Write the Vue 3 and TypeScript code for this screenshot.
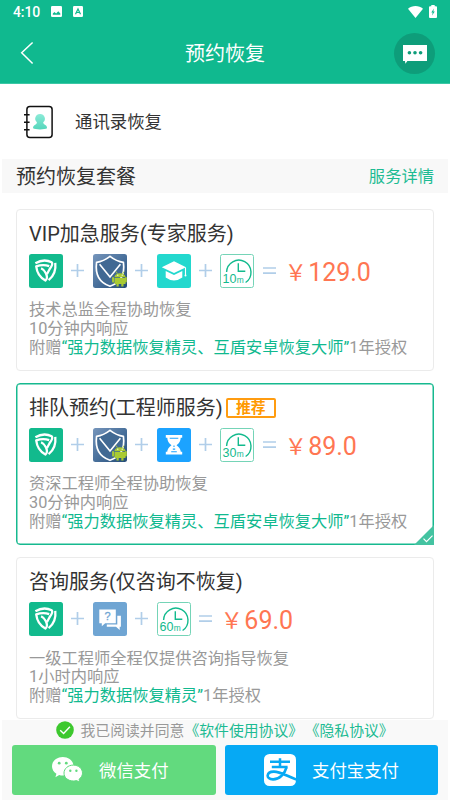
<script setup lang="ts">
import { ref } from 'vue'

type IconKind = 'shield' | 'android' | 'expert' | 'hourglass' | 'consult' | 'clock'

interface Plan {
  title: string
  recommended?: boolean
  icons: IconKind[]
  minutes: number
  price: string
  lines: string[]
  gift: string
}

const plans: Plan[] = [
  {
    title: 'VIP加急服务(专家服务)',
    icons: ['shield', 'android', 'expert', 'clock'],
    minutes: 10,
    price: '129.0',
    lines: ['技术总监全程协助恢复', '10分钟内响应'],
    gift: '“强力数据恢复精灵、互盾安卓恢复大师”',
  },
  {
    title: '排队预约(工程师服务)',
    recommended: true,
    icons: ['shield', 'android', 'hourglass', 'clock'],
    minutes: 30,
    price: '89.0',
    lines: ['资深工程师全程协助恢复', '30分钟内响应'],
    gift: '“强力数据恢复精灵、互盾安卓恢复大师”',
  },
  {
    title: '咨询服务(仅咨询不恢复)',
    icons: ['shield', 'consult', 'clock'],
    minutes: 60,
    price: '69.0',
    lines: ['一级工程师全程仅提供咨询指导恢复', '1小时内响应'],
    gift: '“强力数据恢复精灵”',
  },
]

const selected = ref(1)
</script>

<template>
  <div class="screen">
    <header class="header">
      <div class="status">
        <span class="time">4:10</span>
        <svg class="st-img" width="11" height="11" viewBox="0 0 11 11">
          <rect width="11" height="11" rx="1.2" fill="#fff" />
          <path d="M1.8 8.8V7.4L3.5 6l1.6 1.4L7.3 5.2l2 2.2v1.4z" fill="#10b98f" />
        </svg>
        <svg class="st-a" width="10" height="11" viewBox="0 0 10 11">
          <rect width="10" height="11" rx="1.2" fill="#fff" />
          <path d="M2.5 8.2 5 2.9l2.5 5.3M3.4 6.5h3.2" fill="none" stroke="#10b98f" stroke-width="1.2" />
        </svg>
        <span class="grow"></span>
        <svg class="wifi" width="15" height="12" viewBox="0 0 15 12">
          <path d="M0 2.8C4-.8 11-.8 15 2.8L7.5 12z" fill="#fff" />
        </svg>
        <svg width="8" height="13" viewBox="0 0 8 13">
          <path d="M2.3 1.2V0h3.4v1.2H7q1 0 1 1V12q0 1-1 1H1q-1 0-1-1V2.2q0-1 1-1z" fill="#fff" />
          <path d="M4.9 3.5 2.3 7.6h1.4l-.7 3L5.8 6.4H4.3z" fill="#10b98f" />
        </svg>
      </div>
      <div class="nav">
        <svg class="back" width="14" height="24" viewBox="0 0 14 24">
          <path d="M12.6 1.5 1.7 11.8l10.9 10.7" fill="none" stroke="#fff" stroke-width="1.5" />
        </svg>
        <h1>预约恢复</h1>
        <div class="chat">
          <svg width="24" height="19" viewBox="0 0 24 19">
            <path d="M0 0h24v16H4.4L2.4 18.8 2 16H0z" fill="#fff" />
            <g fill="#0e9d7a"><circle cx="6.4" cy="7.8" r="1.8" /><circle cx="12" cy="7.8" r="1.8" /><circle cx="17.6" cy="7.8" r="1.8" /></g>
          </svg>
        </div>
      </div>
    </header>

    <div class="kind">
      <svg width="30" height="34" viewBox="0 0 30 34">
        <defs>
          <linearGradient id="person" x2="0" y2="1"><stop stop-color="#8cebd8" /><stop offset="1" stop-color="#55d6bb" /></linearGradient>
        </defs>
        <rect x="2.9" y="1.6" width="25.2" height="31" rx="3" fill="none" stroke="#111" stroke-width="1.5" />
        <path d="M0 9.8h5.6M0 17.3h5.6M0 24.8h5.6" stroke="#111" stroke-width="1.4" />
        <path d="M16 9a4.7 4.7 0 0 1 3.2 8.3c.1 2.8 4.3 2.6 3.8 6-2 1.5-12 1.5-13.9 0-.4-3.4 3.8-3.2 3.8-6A4.7 4.7 0 0 1 16 9z" fill="url(#person)" />
      </svg>
      <span>通讯录恢复</span>
    </div>

    <div class="section">
      <h2>预约恢复套餐</h2>
      <a>服务详情</a>
    </div>

    <main class="plans">
      <article v-for="(plan, i) in plans" :key="plan.title" class="plan" :class="{ active: selected === i }" @click="selected = i">
        <div class="title"><h3>{{ plan.title }}</h3><em v-if="plan.recommended">推荐</em></div>
        <div class="bundle">
          <template v-for="(icon, n) in plan.icons" :key="icon">
            <svg v-if="n" class="op" width="13" height="13" viewBox="0 0 13 13"><path d="M0 6.5h13M6.5 0v13" stroke="#b1cee9" stroke-width="1.7" /></svg>

            <svg v-if="icon === 'shield'" class="icon" viewBox="0 0 34 34">
              <rect width="34" height="34" rx="2.5" fill="#12ba8d" />
              <g fill="none" stroke="#fff" stroke-width="2.3" stroke-linejoin="round">
                <path d="M6.4 9.3C11.5 6.2 18 5.9 22.7 8.3c1.4 1.3-.2 4.2-2 6.7l-2.8 5.2" />
                <path d="M19.6 26.2C24.9 22 27.1 16 26.3 8.9" />
                <path d="M20.2 12.2C16.4 10.8 11.2 11 7.2 12.4 7.9 18.6 11.3 23.8 16.4 26.5c1.7-1.2 1.8-4.2.5-7.2-1.1-2.5-2.6-4-4.8-5" />
              </g>
            </svg>

            <svg v-else-if="icon === 'android'" class="icon" viewBox="0 0 34 34">
              <defs><linearGradient id="blue" x2="1" y2="1"><stop stop-color="#7695bb" /><stop offset=".5" stop-color="#4a719c" /><stop offset="1" stop-color="#234c77" /></linearGradient></defs>
              <rect width="34" height="34" rx="2.5" fill="url(#blue)" />
              <path d="M17 2.4Q10.5 7.4 3.6 8.4C2 20.5 6.5 28.8 17 32.3 27.5 28.8 32 20.5 30.4 8.4Q23.5 7.4 17 2.4z" fill="#416993" stroke="#fff" stroke-width="1.7" />
              <path d="M6.6 10.2 17 23l10.4-12.8" fill="none" stroke="#fff" stroke-width="1.6" />
              <g fill="#a9cb32">
                <path d="M21.4 23a5.8 5 0 0 1 11.2 0z" />
                <path d="M21.5 23.7h11v6.3h-2v2.4h-2.2V30h-2.6v2.4h-2.2V30h-2z" />
                <rect x="19.1" y="23" width="1.9" height="5.6" rx=".9" /><rect x="32" y="23" width="1.8" height="5.6" rx=".8" />
              </g>
              <path d="m23 17.5 1.4 2.2m6.6-2.2-1.4 2.2" stroke="#a9cb32" stroke-width=".9" />
              <circle cx="24.8" cy="21.2" r=".6" fill="#fff" /><circle cx="29.2" cy="21.2" r=".6" fill="#fff" />
            </svg>

            <svg v-else-if="icon === 'expert'" class="icon" viewBox="0 0 34 34">
              <rect width="34" height="34" rx="2.5" fill="#23d8ce" />
              <path d="M17 7.3 29 13.2 17 19.1 4.8 13.2z" fill="#fff" />
              <path d="M8.7 17 17 21.1l8.3-4.1v6.5Q17 29.5 8.7 23.5z" fill="#fff" />
              <path d="M28.5 13.4v8.1" stroke="#fff" stroke-width="1.1" /><circle cx="28.5" cy="21.4" r="1" fill="#fff" />
            </svg>

            <svg v-else-if="icon === 'hourglass'" class="icon" viewBox="0 0 34 34">
              <rect width="34" height="34" rx="2.5" fill="#1ca3ff" />
              <path d="M8.8 7h16.4v2.7h-1.5q-.2 5-4.2 7.5 4 2.6 4.3 6.5h1.4v2.8H8.8v-2.8h1.4q.3-3.9 4.3-6.5-4-2.5-4.2-7.5H8.8z" fill="#fff" />
              <path d="M12.7 10.2h8.6M17 17.5v1.6m-1.2 2h2.4m-4 2.7h5.6" stroke="#1ca3ff" stroke-width="1.1" />
            </svg>

            <svg v-else-if="icon === 'consult'" class="icon" viewBox="0 0 34 34">
              <rect width="34" height="34" rx="2.5" fill="#6fa5d3" />
              <path d="M6.3 7.5h16.5v13.7H12.2l-3.4 3v-3H6.3z" fill="#fff" />
              <path d="M24.3 13.7h3.6v11.1h-1.2v3.1l-3.7-3.1h-9.2v-2.3h10.5z" fill="#fff" />
              <text x="14.5" y="18" text-anchor="middle" font-size="11" fill="#6fa5d3" stroke="#6fa5d3" stroke-width=".3">?</text>
            </svg>

            <svg v-else class="icon" viewBox="0 0 34 34">
              <rect x=".5" y=".5" width="33" height="33" rx="2" fill="#fff" stroke="#75d4b7" />
              <path d="M6.6 18a12.2 12.2 0 1 1 19 10.5" fill="none" stroke="#12ba8d" stroke-width="1.4" />
              <path d="M18.3 9.2v8h7" fill="none" stroke="#12ba8d" stroke-width="1.4" />
              <text x="2.4" y="29.3" font-size="12.5" textLength="14" fill="#12ba8d">{{ plan.minutes }}</text>
              <text x="16.8" y="29.3" font-size="8.5" textLength="7" lengthAdjust="spacingAndGlyphs" fill="#12ba8d">m</text>
            </svg>
          </template>
          <svg class="op" width="13" height="13" viewBox="0 0 13 13"><path d="M0 4h13M0 9.2h13" stroke="#b1cee9" stroke-width="1.7" /></svg>
          <span class="price"><i>￥</i>{{ plan.price }}</span>
        </div>
        <div class="desc">
          <p v-for="line in plan.lines" :key="line">{{ line }}</p>
          <p>附赠<b>{{ plan.gift }}</b>1年授权</p>
        </div>
        <svg v-if="selected === i" class="corner" width="20" height="20" viewBox="0 0 20 20">
          <path d="M20 0v20H0z" fill="#44c3a1" /><path d="m9.5 13.7 3 3 6-6" fill="none" stroke="#fff" stroke-width="1.2" />
        </svg>
      </article>
    </main>

    <footer class="footer">
      <div class="agree">
        <svg width="18" height="18" viewBox="0 0 18 18"><circle cx="9" cy="9" r="8.8" fill="#3dc82e" /><path d="m4.2 9.2 3.4 3.3 6.3-6.7" fill="none" stroke="#fff" stroke-width="1.4" /></svg>
        <span>我已阅读并同意</span><a>《软件使用协议》</a><a>《隐私协议》</a>
      </div>
      <div class="pay">
        <button class="wechat">
          <svg width="31" height="26" viewBox="0 0 31 26">
            <path d="M10.8 0C17 0 21.5 4 21.5 9.2s-4.7 9.3-10.7 9.3q-2 0-3.6-.5L3.4 20.2l1-3.5Q0 13.8 0 9.2C0 4 4.7 0 10.8 0z" fill="#fff" />
            <path d="M21.3 8.1c5.2 0 9.2 3.5 9.2 8 0 2.6-1.5 4.7-3.5 6.2l.8 3-3.3-1.8q-1.5.5-3.2.5c-5.3 0-9.3-3.5-9.3-7.9s4-8 9.3-8z" fill="#fff" stroke="#62da7e" stroke-width="1" />
            <g fill="#62da7e"><circle cx="7.2" cy="6.2" r="1.4" /><circle cx="14.3" cy="6.2" r="1.4" /><circle cx="18.3" cy="13.7" r="1.2" /><circle cx="24.4" cy="13.7" r="1.2" /></g>
          </svg>
          <span>微信支付</span>
        </button>
        <button class="alipay">
          <svg width="32" height="32" viewBox="0 0 32 32">
            <rect width="32" height="32" rx="5.5" fill="#fff" />
            <g fill="none" stroke="#06a9f4">
              <path d="M6 7.7h20M16 4.2v8.6M7.8 13.1h15.8" stroke-width="2.5" />
              <path d="M22.5 13.3C20.7 20.2 15 25.5 9 25.4c-7.8-.2-6.7-8 1-7.8 6.4.1 12 4.1 22.5 7.9" stroke-width="2.6" />
            </g>
          </svg>
          <span>支付宝支付</span>
        </button>
      </div>
    </footer>
  </div>
</template>

<style>
body { margin: 0; background: #fff; }
</style>

<style scoped>
* { box-sizing: border-box; }
h1, h2, h3, p { margin: 0; font-weight: 400; }
.screen { width: 450px; height: 800px; overflow: hidden; display: flex; flex-direction: column; background: #fff; font-family: Roboto, "Noto Sans CJK SC", sans-serif; color: #333; }
.header { flex: none; height: 84px; background: #10b98f; border-bottom: 1px solid #3bc7a5; color: #fff; }
.status { height: 23px; padding: 0 13px; display: flex; align-items: center; }
.time { font-size: 14px; font-weight: 500; letter-spacing: -.1px; width: 38px; }
.st-a { margin-left: 11px; }
.grow { flex: 1; }
.wifi { margin-right: 6px; }
.status > svg:last-child { margin-right: .5px; }
.nav { height: 60px; display: grid; grid-template-columns: 70px 1fr 70px; align-items: center; }
.back { margin-left: 20px; }
h1 { padding-top: 2px; font-size: 20px; line-height: 28px; text-align: center; }
.chat { width: 41px; height: 41px; margin-left: 14px; border-radius: 50%; background: #0e9d7a; display: flex; align-items: center; justify-content: center; padding-top: 2px; }
.kind { flex: none; height: 75px; padding-left: 24px; display: flex; align-items: center; gap: 21px; font-size: 17.4px; }
.kind span { padding-bottom: 2px; }
.section { flex: none; height: 34px; margin: 0 2px; padding: 0 14px; display: flex; align-items: center; justify-content: space-between; background: #f8f8f8; }
h2 { padding-top: 2px; font-size: 20px; line-height: 30px; }
.section a { padding-bottom: 2px; font-size: 16.3px; color: #1dbb93; }
.plans { flex: none; height: 526.5px; padding: 15.5px 16px 0; display: flex; flex-direction: column; gap: 12.2px; }
.plan { position: relative; flex: none; height: 162px; padding: 9px 12px 0; border: 1px solid #ebebeb; border-radius: 4px; }
.plan.active { border-color: #16b98f; box-shadow: inset 0 0 0 .5px #16b98f; }
.title { height: 30px; display: flex; align-items: center; }
h3 { font-size: 20px; line-height: 30px; white-space: nowrap; }
em { margin-left: 3px; width: 50px; height: 20px; border: 2px solid #ff9c10; border-radius: 2px; color: #f90; font: 700 14.8px/17px Roboto, "Noto Sans CJK SC", sans-serif; text-align: center; }
.bundle { height: 34px; margin-top: 5px; display: flex; align-items: center; }
.icon { flex: none; width: 34px; height: 34px; font-family: "Liberation Sans", sans-serif; }
.op { flex: none; margin: 0 8.4px; }
.price { height: 34px; padding-top: 2px; line-height: 34px; font-size: 25px; color: #ff7652; white-space: nowrap; display: flex; }
.price i { font-style: normal; font-size: 22px; width: 23.5px; margin-left: .5px; }
.desc { margin-top: 13.8px; font-size: 16.25px; color: #999; white-space: nowrap; }
.desc p { height: 18.8px; line-height: 18.8px; }
b { font-weight: 400; color: #10b98f; }
.corner { position: absolute; right: -1px; bottom: -1px; }
.footer { flex: 1; position: relative; margin: 0 2px; background: #f9f9f9; }
.agree { height: 25px; padding: 0 0 5px 53.5px; display: flex; align-items: center; font-size: 14.85px; color: #999; white-space: nowrap; }
.agree span { margin-left: 7px; }
.agree a { color: #1dbb93; }
.agree a + a { margin-left: 1.5px; }
.pay { display: flex; gap: 9px; padding: 0 10px; }
button { height: 50px; border: 0; border-radius: 3px; padding: 0; display: flex; align-items: center; color: #fff; font: 17.4px Roboto, "Noto Sans CJK SC", sans-serif; }
.wechat { width: 204px; padding-left: 40px; gap: 16px; background: #62da7e; }
.alipay { width: 213px; padding-left: 39px; gap: 16px; background: #06a9f4; }
</style>
